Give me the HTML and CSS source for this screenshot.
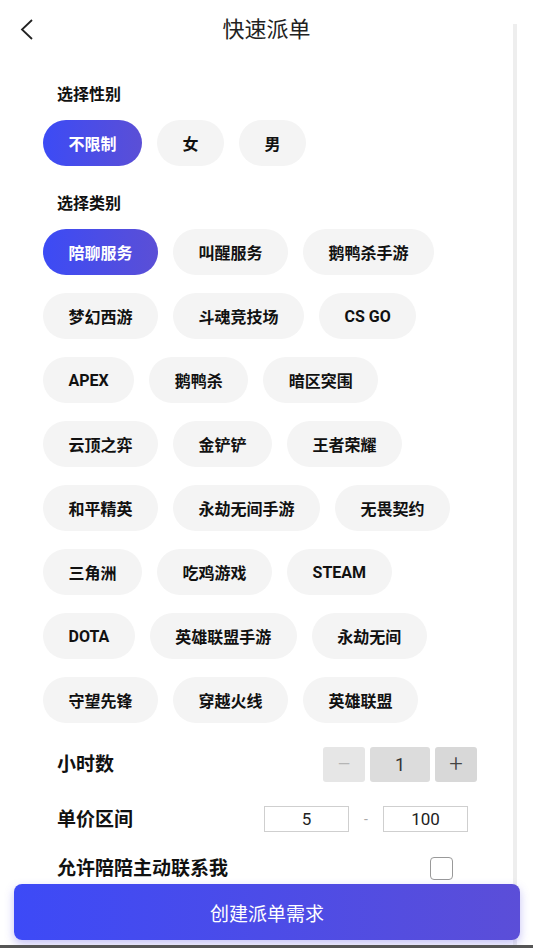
FILE: index.html
```html
<!DOCTYPE html>
<html lang="zh-CN">
<head>
  <meta charset="UTF-8">
  <meta name="viewport" content="width=device-width, initial-scale=1.0">
  <title>快速派单</title>
  <link rel="stylesheet" href="styles.css">
</head>
<body>
  <div class="page">
    <header class="topbar">
      <svg class="back" width="16" height="24" viewBox="0 0 16 24">
        <polyline points="13,2 3,11.5 13,21" fill="none" stroke="#222" stroke-width="1.8"/>
      </svg>
      <h1 class="title">快速派单</h1>
    </header>

    <main class="content">
      <h2 class="label">选择性别</h2>
      <div class="chips">
        <span class="chip active">不限制</span>
        <span class="chip">女</span>
        <span class="chip">男</span>
      </div>

      <h2 class="label label-gap">选择类别</h2>
      <div class="chips">
        <span class="chip active">陪聊服务</span>
        <span class="chip">叫醒服务</span>
        <span class="chip">鹅鸭杀手游</span>
        <span class="chip">梦幻西游</span>
        <span class="chip">斗魂竞技场</span>
        <span class="chip">CS GO</span>
        <span class="chip">APEX</span>
        <span class="chip">鹅鸭杀</span>
        <span class="chip">暗区突围</span>
        <span class="chip">云顶之弈</span>
        <span class="chip">金铲铲</span>
        <span class="chip">王者荣耀</span>
        <span class="chip">和平精英</span>
        <span class="chip">永劫无间手游</span>
        <span class="chip">无畏契约</span>
        <span class="chip">三角洲</span>
        <span class="chip">吃鸡游戏</span>
        <span class="chip">STEAM</span>
        <span class="chip">DOTA</span>
        <span class="chip">英雄联盟手游</span>
        <span class="chip">永劫无间</span>
        <span class="chip">守望先锋</span>
        <span class="chip">穿越火线</span>
        <span class="chip">英雄联盟</span>
      </div>

      <div class="rows">
        <div class="row">
          <span class="row-label">小时数</span>
          <div class="stepper">
            <span class="step minus">—</span>
            <span class="step value">1</span>
            <span class="step plus">+</span>
          </div>
        </div>
        <div class="row row-price">
          <span class="row-label">单价区间</span>
          <div class="price">
            <span class="price-box">5</span>
            <span class="dash">-</span>
            <span class="price-box">100</span>
          </div>
        </div>
        <div class="row row-contact">
          <span class="row-label">允许陪陪主动联系我</span>
          <span class="checkbox"></span>
        </div>
      </div>
    </main>

    <footer class="footer">
      <button class="submit">创建派单需求</button>
      <div class="bottom-bar"></div>
    </footer>
  </div>
</body>
</html>
```

FILE: styles.css
```css
body {
  margin: 0;
  background: #fff;
  font-family: Roboto, "Noto Sans CJK SC", sans-serif;
  color: #111;
}

.page {
  position: relative;
  width: 533px;
  height: 948px;
  overflow: hidden;
  background: #fff;
}

/* light strip along the right edge */
.page::after {
  content: "";
  position: absolute;
  top: 24px;
  bottom: 0;
  left: 513px;
  width: 4px;
  background: #eeeeee;
}

.topbar {
  position: relative;
  height: 60px;
  display: flex;
  align-items: center;
  justify-content: center;
}

.back {
  position: absolute;
  left: 19px;
  top: 18px;
}

.title {
  margin: 0;
  font-size: 22px;
  font-weight: normal;
  color: #222;
  line-height: 1;
}

.content {
  padding: 0 43px;
}

.label {
  margin: 23px 0 0 14px;
  font-size: 16px;
  font-weight: bold;
  line-height: 24px;
}

.label-gap {
  margin-top: 26px;
}

.chips {
  margin-top: 13px;
  display: flex;
  flex-wrap: wrap;
  gap: 18px 15px;
}

.chip {
  height: 46px;
  padding: 0 25.5px;
  border-radius: 23px;
  background: #f4f4f4;
  font-size: 16px;
  font-weight: bold;
  display: flex;
  align-items: center;
  color: #111;
}

.chip.active {
  background: linear-gradient(90deg, #3c4bf5, #5b4fd6);
  color: #fff;
}

.rows {
  margin-top: 21px;
  padding: 0 13px 0 14px;
}

.row {
  height: 40px;
  display: flex;
  align-items: center;
  justify-content: space-between;
}

.row-price {
  margin-top: 15px;
}

.row-contact {
  margin-top: 9px;
}

.row-label {
  font-size: 19px;
  font-weight: bold;
  line-height: 1;
}

.stepper {
  display: flex;
  gap: 5px;
}

.step {
  height: 35px;
  display: flex;
  align-items: center;
  justify-content: center;
  border-radius: 3px;
  font-size: 18px;
}

.step.minus {
  width: 42px;
  background: #e6e6e6;
  color: #b5b5b5;
  font-size: 16px;
}

.step.value {
  width: 60px;
  background: #dcdcdc;
  color: #333;
}

.step.plus {
  width: 42px;
  background: #d8d8d8;
  color: #444;
  font-size: 24px;
  font-weight: 300;
}

.price {
  display: flex;
  align-items: center;
  margin-right: 9px;
}

.price-box {
  width: 83px;
  height: 24px;
  border: 1px solid #cfcfcf;
  display: flex;
  align-items: center;
  justify-content: center;
  font-size: 17px;
  color: #222;
}

.dash {
  width: 34px;
  text-align: center;
  color: #aaa;
  font-size: 14px;
}

.checkbox {
  width: 21px;
  height: 21px;
  border: 1px solid #999;
  border-radius: 4px;
  margin-right: 24px;
}

.footer {
  position: absolute;
  left: 0;
  right: 0;
  bottom: 0;
  z-index: 1;
}

.submit {
  display: block;
  width: 506px;
  height: 56px;
  margin: 0 0 5px 14px;
  border: none;
  border-radius: 8px;
  background: linear-gradient(90deg, #3d4af7, #5b4ed8);
  box-shadow: 0 4px 10px rgba(90, 80, 230, 0.35);
  color: #fff;
  font-family: "Noto Sans CJK SC", sans-serif;
  font-size: 19px;
  cursor: pointer;
}

.bottom-bar {
  height: 3px;
  background: #555;
}
```
